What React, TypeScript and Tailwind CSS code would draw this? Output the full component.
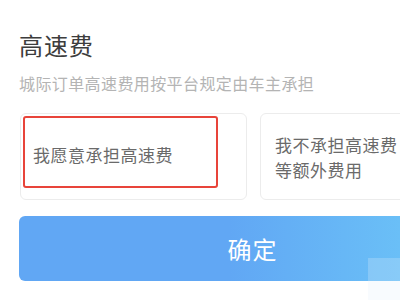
import React from 'react';

const FONT = { fontFamily: '"Noto Sans CJK SC", "Noto Sans", sans-serif' };

export default function App() {
  return (
    <div className="relative w-[400px] h-[300px] overflow-hidden bg-white" style={FONT}>
      <div className="w-[506px] pl-[19px] pr-[19px] pt-[27px]">
        <h1 className="text-[24px] leading-[36px] text-[#3d3d3d] font-normal tracking-[1px]">高速费</h1>
        <p className="mt-[8px] text-[16px] leading-[24px] text-[#b4b4b4] tracking-[0.4px]">
          城际订单高速费用按平台规定由车主承担
        </p>

        <div className="mt-[18px] flex gap-[13px]">
          <div className="w-[227px] h-[87px] ml-px rounded-[6px] border border-[#ececec] bg-white p-[2px]">
            <div className="w-[195px] h-[72px] rounded-[3px] border-2 border-[#e8443a] flex items-center pl-[8px] pt-[6px]">
              <span className="text-[17px] text-[#6a6a6a] tracking-[0.5px]">我愿意承担高速费</span>
            </div>
          </div>
          <div className="w-[227px] h-[87px] rounded-[6px] border border-[#ececec] bg-white flex items-center pl-[14px] pt-[1px]">
            <span className="w-[130px] text-[17px] leading-[25px] text-[#6a6a6a] tracking-[0.5px]">
              我不承担高速费等额外费用
            </span>
          </div>
        </div>

        <button className="mt-[16px] w-[467px] h-[65px] rounded-[6px] bg-gradient-to-r from-[#61a7f4] from-45% to-[#6fcbf8] flex items-center justify-center">
          <span className="text-[24px] text-white tracking-[1px]">确定</span>
        </button>
      </div>

      <div className="absolute left-[368px] top-[258px] w-[32px] h-[42px] bg-[#e3effb]/25" />
    </div>
  );
}
